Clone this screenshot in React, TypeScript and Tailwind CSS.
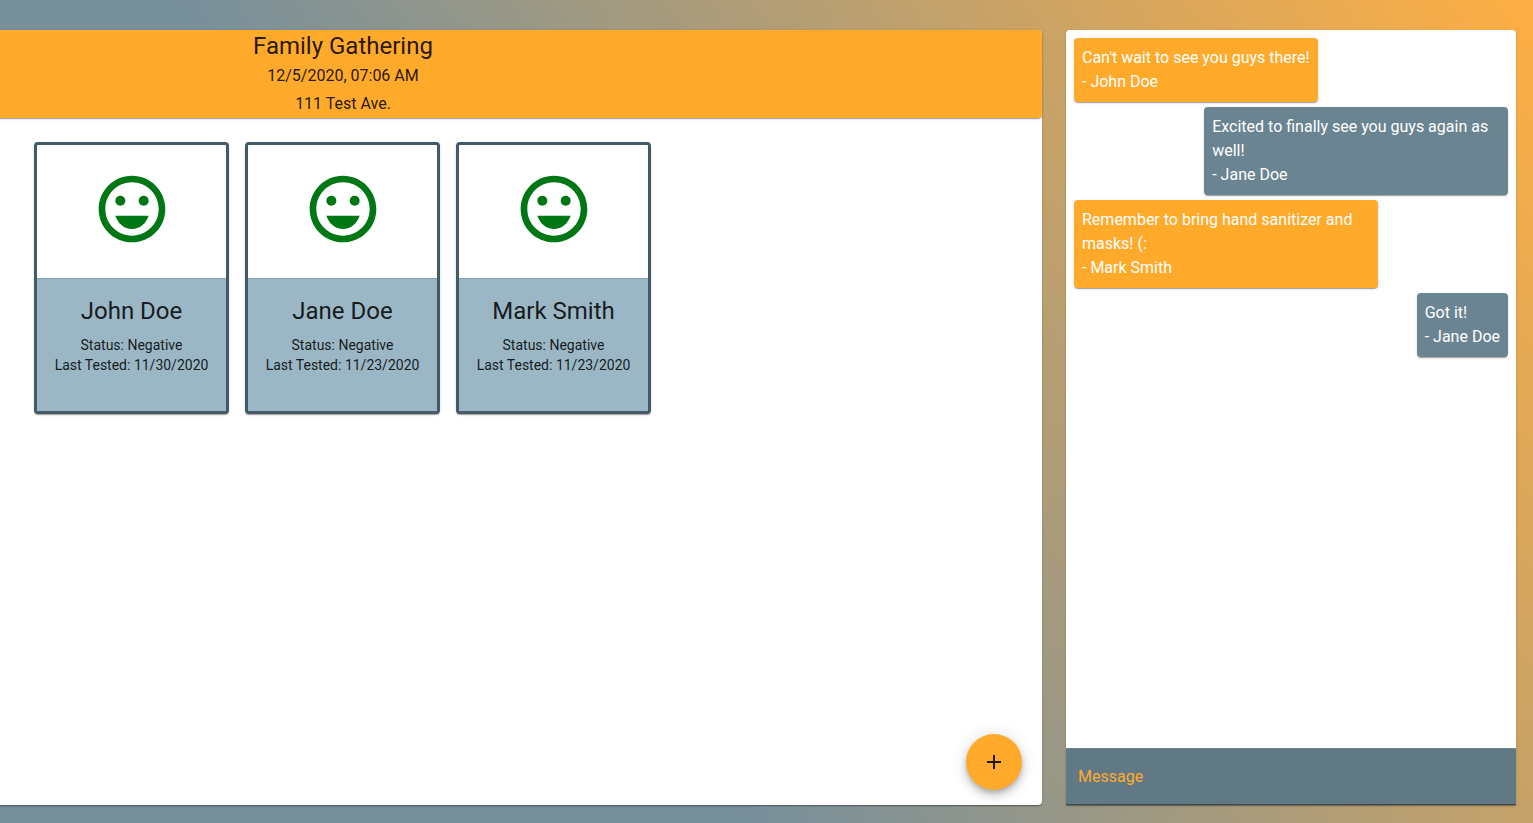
import { useState } from "react";

type Guest = { name: string; status: string; tested: string };
type ChatMessage = { text: string; author: string; own: boolean };

const guests: Guest[] = [
  { name: "John Doe", status: "Negative", tested: "11/30/2020" },
  { name: "Jane Doe", status: "Negative", tested: "11/23/2020" },
  { name: "Mark Smith", status: "Negative", tested: "11/23/2020" },
];

const messages: ChatMessage[] = [
  { text: "Can't wait to see you guys there!", author: "John Doe", own: false },
  { text: "Excited to finally see you guys again as well!", author: "Jane Doe", own: true },
  { text: "Remember to bring hand sanitizer and masks! (:", author: "Mark Smith", own: false },
  { text: "Got it!", author: "Jane Doe", own: true },
];

const elevation =
  "shadow-[0_2px_1px_-1px_rgba(0,0,0,0.2),0_1px_1px_0_rgba(0,0,0,0.14),0_1px_3px_0_rgba(0,0,0,0.12)]";

function HappyFace() {
  return (
    <svg viewBox="0 0 24 24" className="size-20 fill-[#007715]" aria-hidden="true">
      <circle cx="15.5" cy="9.5" r="1.5" />
      <circle cx="8.5" cy="9.5" r="1.5" />
      <path d="M11.99 2C6.47 2 2 6.48 2 12s4.47 10 9.99 10C17.52 22 22 17.52 22 12S17.52 2 11.99 2zM12 20c-4.42 0-8-3.58-8-8s3.58-8 8-8 8 3.58 8 8-3.58 8-8 8zm-5-6c.78 2.34 2.72 4 5 4s4.22-1.66 5-4H7z" />
    </svg>
  );
}

function GuestCard({ guest }: { guest: Guest }) {
  return (
    <li
      className={`flex h-[272px] w-[195px] flex-col overflow-hidden rounded border-3 border-[#425b66] bg-white ${elevation}`}
    >
      <div className="flex h-1/2 items-start justify-center pt-6">
        <HappyFace />
      </div>
      <div className="h-1/2 border-t border-[#86a2b0] bg-[#9bb7c5] pt-4 text-center">
        <h2 className="text-2xl">{guest.name}</h2>
        <p className="mt-2 text-sm">
          Status: {guest.status}
          <br />
          Last Tested: {guest.tested}
        </p>
      </div>
    </li>
  );
}

function Bubble({ message }: { message: ChatMessage }) {
  const side = message.own ? "self-end bg-[#6b8491]" : "self-start bg-[#ffaa2b]";
  return (
    <li className={`max-w-[70%] rounded p-2 text-base text-white ${side} ${elevation}`}>
      {message.text}
      <br />- {message.author}
    </li>
  );
}

export default function App() {
  const [draft, setDraft] = useState("");

  return (
    <div className="flex h-screen gap-6 overflow-hidden bg-[linear-gradient(55deg,#78909c_36%,#ffaf43_100%)] pt-[30px] pr-[17px] pb-[18px] font-[Roboto,sans-serif] text-black/87">
      <main
        className={`-ml-[356px] flex min-w-0 flex-1 flex-col rounded bg-white ${elevation}`}
      >
        <header className={`rounded bg-[#ffaa2b] text-center ${elevation}`}>
          <h1 className="text-2xl">Family Gathering</h1>
          <p className="text-base leading-7">12/5/2020, 07:06 AM</p>
          <p className="text-base leading-7">111 Test Ave.</p>
        </header>
        <ul className="flex flex-wrap gap-4 pt-6 pr-6 pl-[390px]">
          {guests.map((guest) => (
            <GuestCard key={guest.name} guest={guest} />
          ))}
        </ul>
        <button
          type="button"
          aria-label="Add guest"
          className="mt-auto mr-5 mb-[15px] flex size-14 items-center justify-center self-end rounded-full bg-[#ffaa2b] shadow-[0_3px_5px_-1px_rgba(0,0,0,0.2),0_6px_10px_0_rgba(0,0,0,0.14),0_1px_18px_0_rgba(0,0,0,0.12)]"
        >
          <svg viewBox="0 0 24 24" className="size-6 fill-current" aria-hidden="true">
            <path d="M19 13h-6v6h-2v-6H5v-2h6V5h2v6h6v2z" />
          </svg>
        </button>
      </main>

      <aside className={`flex w-[450px] shrink-0 flex-col rounded-t bg-white ${elevation}`}>
        <ul className="flex flex-1 flex-col gap-[5px] p-2">
          {messages.map((message) => (
            <Bubble key={message.text} message={message} />
          ))}
        </ul>
        <form
          className="border-t border-[#6b8491] bg-[#6b8491]"
          onSubmit={(event) => event.preventDefault()}
        >
          <input
            type="text"
            aria-label="Message"
            placeholder="Message"
            value={draft}
            onChange={(event) => setDraft(event.target.value)}
            className="block h-14 w-full rounded-t border-b border-[#3a4a52] bg-[#617985] px-3 text-base text-[#ffaa2b] outline-none placeholder:text-[#ffaa2b]"
          />
        </form>
      </aside>
    </div>
  );
}
